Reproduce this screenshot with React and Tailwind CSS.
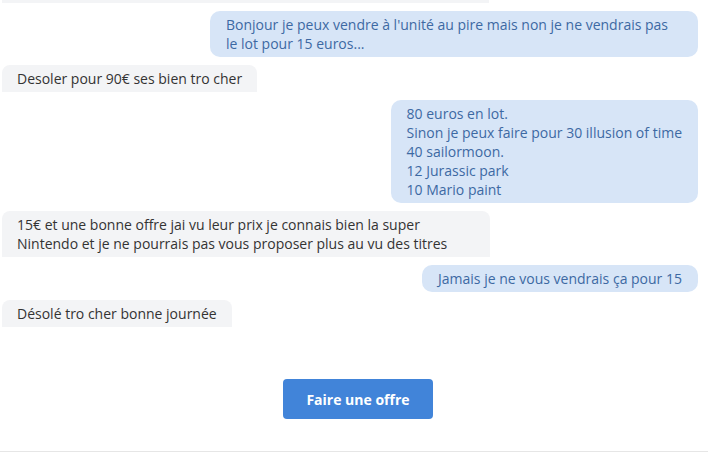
import React from "react";

const messages = [
  { from: "me", text: "Bonjour je peux vendre à l'unité au pire mais non je ne vendrais pas le lot pour 15 euros..." },
  { from: "them", text: "Desoler pour 90€ ses bien tro cher" },
  { from: "me", text: "80 euros en lot.\nSinon je peux faire pour 30 illusion of time\n40 sailormoon.\n12 Jurassic park\n10 Mario paint" },
  { from: "them", text: "15€ et une bonne offre jai vu leur prix je connais bien la super Nintendo et je ne pourrais pas vous proposer plus au vu des titres" },
  { from: "me", text: "Jamais je ne vous vendrais ça pour 15" },
  { from: "them", text: "Désolé tro cher bonne journée" },
];

function Bubble({ from, text }) {
  const mine = from === "me";
  return (
    <div className={`flex ${mine ? "justify-end" : "justify-start"}`}>
      <div
        className={
          mine
            ? "max-w-[488px] rounded-[10px] bg-[#d7e5f7] px-4 py-1 text-[#3d69a3] whitespace-pre-line"
            : "max-w-[488px] rounded-t-[8px] bg-[#f3f4f6] px-[15px] py-1 text-[#333333] whitespace-pre-line"
        }
      >
        {text}
      </div>
    </div>
  );
}

export default function App() {
  return (
    <div className="w-[708px] h-[453px] bg-white overflow-hidden font-['Open_Sans',sans-serif] text-[14px] leading-[19px]">
      <div className="pl-[2px] pr-[10px]">
        <div className="h-[3px] w-[487px] bg-[#f3f4f6]" />
        <div className="flex flex-col gap-2 pt-[8px]">
          {messages.map((m, i) => (
            <Bubble key={i} {...m} />
          ))}
        </div>
      </div>
      <div className="flex justify-center pl-2 pt-[52px] pb-[32px]">
        <button className="h-10 w-[150px] rounded-[4px] bg-[#4184d9] text-[14px] font-bold text-white">
          Faire une offre
        </button>
      </div>
      <div className="h-px w-full bg-[#e6e6e6]" />
    </div>
  );
}
